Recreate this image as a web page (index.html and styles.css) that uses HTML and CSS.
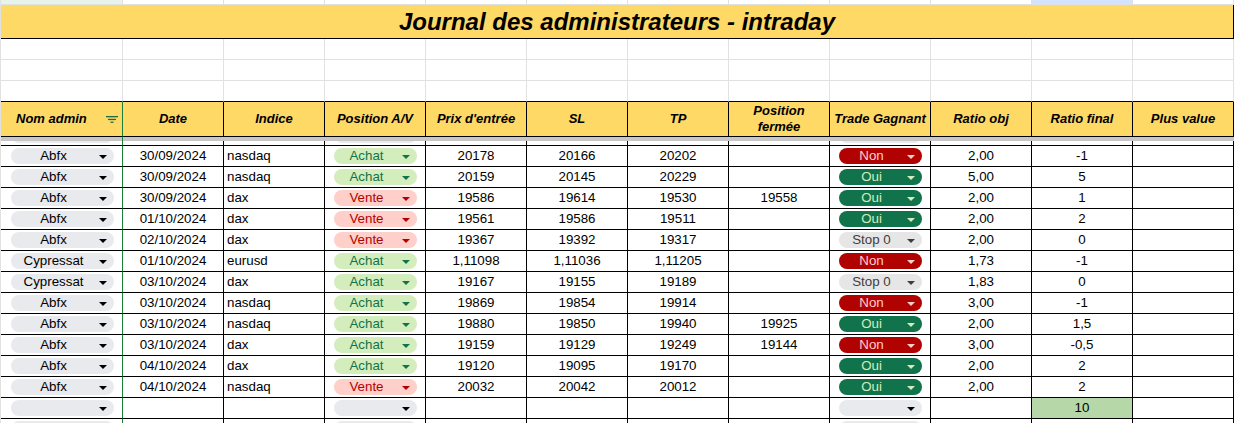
FILE: index.html
```html
<!DOCTYPE html>
<html lang="fr">
<head>
<meta charset="utf-8">
<title>Journal des administrateurs - intraday</title>
<link rel="stylesheet" href="styles.css">
</head>
<body>
<div class="sheet">
  <div class="row r0">
    <div class="c sel-g"></div><div class="c"></div><div class="c"></div><div class="c"></div><div class="c"></div><div class="c"></div><div class="c"></div><div class="c"></div><div class="c"></div><div class="c"></div><div class="c sel-b"></div><div class="c"></div>
  </div>
  <div class="row">
    <div class="title">Journal des administrateurs - intraday</div>
  </div>
  <div class="row blank">
    <div class="c"></div><div class="c"></div><div class="c"></div><div class="c"></div><div class="c"></div><div class="c"></div><div class="c"></div><div class="c"></div><div class="c"></div><div class="c"></div><div class="c"></div><div class="c"></div>
  </div>
  <div class="row blank">
    <div class="c"></div><div class="c"></div><div class="c"></div><div class="c"></div><div class="c"></div><div class="c"></div><div class="c"></div><div class="c"></div><div class="c"></div><div class="c"></div><div class="c"></div><div class="c"></div>
  </div>
  <div class="row blank last">
    <div class="c"></div><div class="c"></div><div class="c"></div><div class="c"></div><div class="c"></div><div class="c"></div><div class="c"></div><div class="c"></div><div class="c"></div><div class="c"></div><div class="c"></div><div class="c"></div>
  </div>
  <div class="row head">
    <div class="c g first"><span>Nom admin</span>
      <svg class="filter" width="12" height="7" viewBox="0 0 12 7"><rect x="0" y="0" width="12" height="1.3" fill="#1d6b3a"/><rect x="2" y="2.8" width="8" height="1.3" fill="#1d6b3a"/><rect x="4.5" y="5.6" width="3" height="1.3" fill="#1d6b3a"/></svg>
    </div>
    <div class="c">Date</div>
    <div class="c">Indice</div>
    <div class="c">Position A/V</div>
    <div class="c">Prix d'entrée</div>
    <div class="c">SL</div>
    <div class="c">TP</div>
    <div class="c wrap">Position<br>fermée</div>
    <div class="c">Trade Gagnant</div>
    <div class="c">Ratio obj</div>
    <div class="c">Ratio final</div>
    <div class="c">Plus value</div>
  </div>
  <div class="row band">
    <div class="b g"></div><div class="b"></div>
  </div>
  <div class="row d part">
    <div class="c g"><div class="chip"></div></div><div class="c"></div><div class="c"></div><div class="c"><div class="chip"></div></div><div class="c"></div><div class="c"></div><div class="c"></div><div class="c"></div><div class="c"><div class="chip"></div></div><div class="c"></div><div class="c"></div><div class="c"></div>
  </div>

  <div class="row d">
    <div class="c g"><div class="chip"><span class="lbl">Abfx</span><span class="caret"></span></div></div>
    <div class="c">30/09/2024</div>
    <div class="c l">nasdaq</div>
    <div class="c"><div class="chip achat"><span class="lbl">Achat</span><span class="caret"></span></div></div>
    <div class="c">20178</div><div class="c">20166</div><div class="c">20202</div><div class="c"></div>
    <div class="c"><div class="chip non"><span class="lbl">Non</span><span class="caret"></span></div></div>
    <div class="c">2,00</div><div class="c">-1</div><div class="c"></div>
  </div>
  <div class="row d">
    <div class="c g"><div class="chip"><span class="lbl">Abfx</span><span class="caret"></span></div></div>
    <div class="c">30/09/2024</div>
    <div class="c l">nasdaq</div>
    <div class="c"><div class="chip achat"><span class="lbl">Achat</span><span class="caret"></span></div></div>
    <div class="c">20159</div><div class="c">20145</div><div class="c">20229</div><div class="c"></div>
    <div class="c"><div class="chip oui"><span class="lbl">Oui</span><span class="caret"></span></div></div>
    <div class="c">5,00</div><div class="c">5</div><div class="c"></div>
  </div>
  <div class="row d">
    <div class="c g"><div class="chip"><span class="lbl">Abfx</span><span class="caret"></span></div></div>
    <div class="c">30/09/2024</div>
    <div class="c l">dax</div>
    <div class="c"><div class="chip vente"><span class="lbl">Vente</span><span class="caret"></span></div></div>
    <div class="c">19586</div><div class="c">19614</div><div class="c">19530</div><div class="c">19558</div>
    <div class="c"><div class="chip oui"><span class="lbl">Oui</span><span class="caret"></span></div></div>
    <div class="c">2,00</div><div class="c">1</div><div class="c"></div>
  </div>
  <div class="row d">
    <div class="c g"><div class="chip"><span class="lbl">Abfx</span><span class="caret"></span></div></div>
    <div class="c">01/10/2024</div>
    <div class="c l">dax</div>
    <div class="c"><div class="chip vente"><span class="lbl">Vente</span><span class="caret"></span></div></div>
    <div class="c">19561</div><div class="c">19586</div><div class="c">19511</div><div class="c"></div>
    <div class="c"><div class="chip oui"><span class="lbl">Oui</span><span class="caret"></span></div></div>
    <div class="c">2,00</div><div class="c">2</div><div class="c"></div>
  </div>
  <div class="row d">
    <div class="c g"><div class="chip"><span class="lbl">Abfx</span><span class="caret"></span></div></div>
    <div class="c">02/10/2024</div>
    <div class="c l">dax</div>
    <div class="c"><div class="chip vente"><span class="lbl">Vente</span><span class="caret"></span></div></div>
    <div class="c">19367</div><div class="c">19392</div><div class="c">19317</div><div class="c"></div>
    <div class="c"><div class="chip stop"><span class="lbl">Stop 0</span><span class="caret"></span></div></div>
    <div class="c">2,00</div><div class="c">0</div><div class="c"></div>
  </div>
  <div class="row d">
    <div class="c g"><div class="chip"><span class="lbl">Cypressat</span><span class="caret"></span></div></div>
    <div class="c">01/10/2024</div>
    <div class="c l">eurusd</div>
    <div class="c"><div class="chip achat"><span class="lbl">Achat</span><span class="caret"></span></div></div>
    <div class="c">1,11098</div><div class="c">1,11036</div><div class="c">1,11205</div><div class="c"></div>
    <div class="c"><div class="chip non"><span class="lbl">Non</span><span class="caret"></span></div></div>
    <div class="c">1,73</div><div class="c">-1</div><div class="c"></div>
  </div>
  <div class="row d">
    <div class="c g"><div class="chip"><span class="lbl">Cypressat</span><span class="caret"></span></div></div>
    <div class="c">03/10/2024</div>
    <div class="c l">dax</div>
    <div class="c"><div class="chip achat"><span class="lbl">Achat</span><span class="caret"></span></div></div>
    <div class="c">19167</div><div class="c">19155</div><div class="c">19189</div><div class="c"></div>
    <div class="c"><div class="chip stop"><span class="lbl">Stop 0</span><span class="caret"></span></div></div>
    <div class="c">1,83</div><div class="c">0</div><div class="c"></div>
  </div>
  <div class="row d">
    <div class="c g"><div class="chip"><span class="lbl">Abfx</span><span class="caret"></span></div></div>
    <div class="c">03/10/2024</div>
    <div class="c l">nasdaq</div>
    <div class="c"><div class="chip achat"><span class="lbl">Achat</span><span class="caret"></span></div></div>
    <div class="c">19869</div><div class="c">19854</div><div class="c">19914</div><div class="c"></div>
    <div class="c"><div class="chip non"><span class="lbl">Non</span><span class="caret"></span></div></div>
    <div class="c">3,00</div><div class="c">-1</div><div class="c"></div>
  </div>
  <div class="row d">
    <div class="c g"><div class="chip"><span class="lbl">Abfx</span><span class="caret"></span></div></div>
    <div class="c">03/10/2024</div>
    <div class="c l">nasdaq</div>
    <div class="c"><div class="chip achat"><span class="lbl">Achat</span><span class="caret"></span></div></div>
    <div class="c">19880</div><div class="c">19850</div><div class="c">19940</div><div class="c">19925</div>
    <div class="c"><div class="chip oui"><span class="lbl">Oui</span><span class="caret"></span></div></div>
    <div class="c">2,00</div><div class="c">1,5</div><div class="c"></div>
  </div>
  <div class="row d">
    <div class="c g"><div class="chip"><span class="lbl">Abfx</span><span class="caret"></span></div></div>
    <div class="c">03/10/2024</div>
    <div class="c l">dax</div>
    <div class="c"><div class="chip achat"><span class="lbl">Achat</span><span class="caret"></span></div></div>
    <div class="c">19159</div><div class="c">19129</div><div class="c">19249</div><div class="c">19144</div>
    <div class="c"><div class="chip non"><span class="lbl">Non</span><span class="caret"></span></div></div>
    <div class="c">3,00</div><div class="c">-0,5</div><div class="c"></div>
  </div>
  <div class="row d">
    <div class="c g"><div class="chip"><span class="lbl">Abfx</span><span class="caret"></span></div></div>
    <div class="c">04/10/2024</div>
    <div class="c l">dax</div>
    <div class="c"><div class="chip achat"><span class="lbl">Achat</span><span class="caret"></span></div></div>
    <div class="c">19120</div><div class="c">19095</div><div class="c">19170</div><div class="c"></div>
    <div class="c"><div class="chip oui"><span class="lbl">Oui</span><span class="caret"></span></div></div>
    <div class="c">2,00</div><div class="c">2</div><div class="c"></div>
  </div>
  <div class="row d">
    <div class="c g"><div class="chip"><span class="lbl">Abfx</span><span class="caret"></span></div></div>
    <div class="c">04/10/2024</div>
    <div class="c l">nasdaq</div>
    <div class="c"><div class="chip vente"><span class="lbl">Vente</span><span class="caret"></span></div></div>
    <div class="c">20032</div><div class="c">20042</div><div class="c">20012</div><div class="c"></div>
    <div class="c"><div class="chip oui"><span class="lbl">Oui</span><span class="caret"></span></div></div>
    <div class="c">2,00</div><div class="c">2</div><div class="c"></div>
  </div>
  <div class="row d">
    <div class="c g"><div class="chip"><span class="lbl"></span><span class="caret"></span></div></div>
    <div class="c"></div>
    <div class="c l"></div>
    <div class="c"><div class="chip"><span class="lbl"></span><span class="caret"></span></div></div>
    <div class="c"></div><div class="c"></div><div class="c"></div><div class="c"></div>
    <div class="c"><div class="chip"><span class="lbl"></span><span class="caret"></span></div></div>
    <div class="c"></div><div class="c sum">10</div><div class="c"></div>
  </div>
  <div class="row d tail">
    <div class="c g"><div class="chip"></div></div><div class="c"></div><div class="c"></div><div class="c"><div class="chip"></div></div><div class="c"></div><div class="c"></div><div class="c"></div><div class="c"></div><div class="c"><div class="chip"></div></div><div class="c"></div><div class="c"></div><div class="c"></div>
  </div>
</div>
</body>
</html>
```

FILE: styles.css
```css
html, body {
  margin: 0;
  padding: 0;
  background: #ffffff;
  overflow: hidden;
}

.sheet {
  width: 1234px;
  border-left: 1px solid #e1e1e1;
  font-family: "Liberation Sans", Arial, sans-serif;
  font-size: 13.33px;
  color: #000000;
}

.row {
  display: grid;
  grid-template-columns: 122px repeat(11, 101px);
}

.c {
  box-sizing: border-box;
  border-right: 1px solid #e1e1e1;
  border-bottom: 1px solid #e1e1e1;
  overflow: hidden;
  white-space: nowrap;
}

/* top partial row */
.r0 .c { height: 5px; }
.sel-g { background: #e6f4ea; }
.sel-b { background: #d3e3fd; }

/* title */
.title {
  grid-column: 1 / -1;
  box-sizing: border-box;
  height: 34px;
  background: #ffd966;
  border-right: 1px solid #000;
  border-bottom: 1px solid #000;
  text-align: center;
  font-size: 24px;
  font-weight: bold;
  font-style: italic;
  line-height: 33px;
}

/* blank rows */
.blank .c { height: 21px; }
.blank.last .c { border-bottom-color: #000; }

/* header */
.head .c {
  height: 35px;
  background: #ffd966;
  border-right-color: #000;
  border-bottom-color: #000;
  display: flex;
  align-items: center;
  justify-content: center;
  text-align: center;
  font-size: 13px;
  font-weight: bold;
  font-style: italic;
  line-height: 16px;
}
.head .c.wrap { white-space: normal; }
.head .c.first {
  justify-content: flex-start;
  padding-left: 15px;
}
.head .filter {
  margin-left: auto;
  margin-right: 4px;
  margin-top: 1px;
}

.row .g, .head .c.g { border-right-color: #188038; }

/* frozen divider */
.band { height: 4px; }
.band .b { background: #c7c7c7; height: 4px; box-sizing: border-box; }
.band .b.g { border-right: 1px solid #188038; }
.band .b + .b { grid-column: 2 / -1; }

/* data rows */
.d .c {
  height: 21px;
  border-right-color: #000;
  border-bottom-color: #000;
  line-height: 20px;
  text-align: center;
}
.d .c.g { border-right-color: #188038; }
.d .c.l { text-align: left; padding-left: 3px; }
.d .c.sum { background: #b6d7a8; }

.part .c { height: 5px; }
.part .chip { margin-top: -14px; }
.tail .c { height: 5px; border-bottom: none; }

/* dropdown chips */
.chip {
  display: flex;
  align-items: center;
  height: 16px;
  margin: 2px 8px 0 9px;
  border-radius: 8px;
  background: #e8eaed;
  color: #000;
  line-height: 16px;
}
.d .c.g .chip { margin-left: 10px; }
.chip .lbl {
  flex: 1;
  text-align: center;
  overflow: hidden;
}
.chip .caret {
  width: 0;
  height: 0;
  border-left: 4px solid transparent;
  border-right: 4px solid transparent;
  border-top: 4px solid currentColor;
  margin: 1px 7px 0 3px;
}
.chip.achat { background: #d4edbc; color: #11734b; }
.chip.vente { background: #ffcfc9; color: #b10202; }
.chip.non { background: #b10202; color: #ffcfc9; }
.chip.oui { background: #11734b; color: #d4edbc; }
.chip.stop { background: #e6e6e6; color: #3d3d3d; }
```
